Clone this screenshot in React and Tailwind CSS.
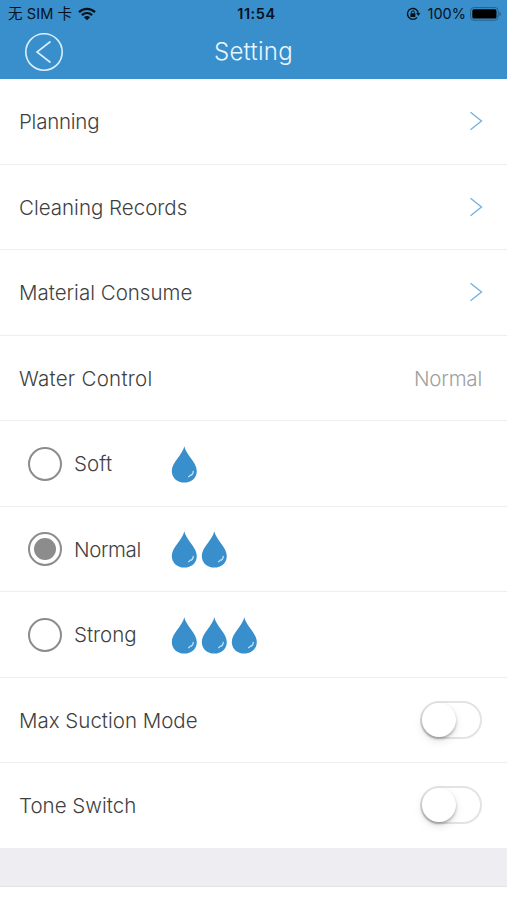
import React, { useState } from "react";

const links = [
  { label: "Planning", tracking: "tracking-[-0.25px]" },
  { label: "Cleaning Records", tracking: "tracking-normal" },
  { label: "Material Consume", tracking: "tracking-normal" },
];

const levels = [
  { label: "Soft", drops: 1, tracking: "tracking-[0.1px]" },
  { label: "Normal", drops: 2, tracking: "tracking-[-0.4px]" },
  { label: "Strong", drops: 3, tracking: "tracking-normal" },
];

const Row = ({ children }) => (
  <div className="flex h-[85.5px] items-center border-b-[1.5px] border-[#eeeeef] pl-[19px] pr-[25px]">
    {children}
  </div>
);

const Wifi = () => (
  <svg width="18" height="14" viewBox="0 0 18 14" className="ml-[6px]">
    <g fill="none" stroke="#06121c" strokeWidth="2.3">
      <path d="M1 5.1C5.6 .7 12.4 .7 17 5.1" />
      <path d="M3.9 8.1c3-2.7 7.2-2.7 10.2 0" />
    </g>
    <path d="M9 13.2 5.9 10.2c1.8-1.5 4.4-1.5 6.2 0z" fill="#06121c" />
  </svg>
);

const RotationLock = () => (
  <svg width="15" height="14" viewBox="0 0 15 14">
    <path d="M11.1 10.3A5.4 5.4 0 1 1 12.3 7" fill="none" stroke="#06121c" strokeWidth="1.3" />
    <path d="M10.2 6h4.2l-2.1 3z" fill="#06121c" />
    <rect x="4.4" y="6.3" width="5" height="3.8" rx=".5" fill="#06121c" />
    <path d="M5.4 6.5V5.3a1.5 1.5 0 0 1 3 0v1.2" fill="none" stroke="#06121c" strokeWidth="1" />
  </svg>
);

const Battery = () => (
  <svg width="32" height="14" viewBox="0 0 32 14" className="ml-[4px]">
    <rect x=".6" y=".6" width="27.6" height="12.6" rx="3.2" fill="none" stroke="#27608a" strokeWidth="1" />
    <rect x="2.3" y="2.3" width="24.2" height="9.2" rx="1.6" fill="#000" />
    <path d="M29.4 4.7c1.9.7 1.9 3.7 0 4.4z" fill="#27608a" />
  </svg>
);

const Chevron = () => (
  <svg width="14" height="20" viewBox="0 0 14 20" className="mr-[-1px]">
    <path d="M1.5 1.3 12.5 10 1.5 18.7" fill="none" stroke="#72afdd" strokeWidth="1.3" />
  </svg>
);

const Drop = () => (
  <svg width="26" height="38" viewBox="0 0 26 38">
    <path
      d="M13.3 .3C14.8 8.5 25.8 16.5 25.8 24.9 25.8 31.8 20.3 36.5 13.3 36.5S.8 31.8 .8 24.9C.8 16.5 11.8 8.5 13.3 .3z"
      fill="#388fcb"
    />
    <path d="M22.4 24.9c-.1 2.1-.9 3.5-2.1 4.4-.5-.5-1-.4-1.3.1-.4.8-1 1.2-1.9 1.5" fill="none" stroke="#c4e5fa" strokeWidth="1.2" />
  </svg>
);

const Radio = ({ checked }) => (
  <span className="flex size-[34px] items-center justify-center rounded-full border-2 border-[#8c8c8c]">
    {checked && <span className="size-[22px] rounded-full bg-[#8c8c8c]" />}
  </span>
);

const Switch = ({ on, onClick }) => (
  <button
    onClick={onClick}
    className={`ml-auto flex h-[38px] w-[62px] items-center rounded-full border-2 ${
      on ? "justify-end border-[#388fcb] bg-[#388fcb]" : "border-[#e3e3e3] bg-white"
    }`}
  >
    <span className="size-[34px] rounded-full bg-white shadow-[0_2px_3px_rgba(0,0,0,0.28),0_4px_10px_rgba(0,0,0,0.1)]" />
  </button>
);

const App = () => {
  const [level, setLevel] = useState("Normal");
  const [maxSuction, setMaxSuction] = useState(false);
  const [tone, setTone] = useState(false);

  return (
    <div className="h-[900px] w-[507px] overflow-hidden bg-white font-['Inter','Noto_Sans_CJK_SC',sans-serif] text-[20.5px] font-light text-[#3f3f3f]">
      {/* Header */}
      <header className="h-[79px] bg-[#388fcc]">
        <div className="grid h-[27px] grid-cols-3 items-center pl-[8px] pr-[5px] text-[14.5px] font-normal text-[#06121c]">
          <div className="flex items-center">
            <span className="whitespace-pre tracking-[0.1px]">无 SIM 卡</span>
            <Wifi />
          </div>
          <span className="pl-[3px] text-center text-[14.5px] font-semibold tracking-[0.6px]">11:54</span>
          <div className="flex items-center justify-end">
            <RotationLock />
            <span className="ml-[7px]">100%</span>
            <Battery />
          </div>
        </div>
        <div className="grid h-[50px] grid-cols-[1fr_auto_1fr] items-center pl-[24px] pr-[24px]">
          <svg width="40" height="40" viewBox="0 0 40 40" fill="none" stroke="#d9efff">
            <circle cx="20" cy="20" r="18.2" strokeWidth="1.6" />
            <path d="M26.5 9.5 13 20l13.5 10.5" strokeWidth="1.6" />
          </svg>
          <h1 className="text-[24px] tracking-[0.3px] text-[#e9f6ff]">Setting</h1>
        </div>
      </header>

      {/* Links */}
      {links.map((link) => (
        <Row key={link.label}>
          <span className={`flex-1 pt-[3px] ${link.tracking}`}>{link.label}</span>
          <Chevron />
        </Row>
      ))}

      {/* Water level */}
      <Row>
        <span className="flex-1 pt-[3px] tracking-[0.25px]">Water Control</span>
        <span className="pt-[3px] tracking-[-0.2px] text-[#a0a0a0]">{level}</span>
      </Row>
      {levels.map(({ label, drops, tracking }) => (
        <Row key={label}>
          <button className="flex items-center pt-[1px] pl-[9px]" onClick={() => setLevel(label)}>
            <Radio checked={level === label} />
            <span className={`ml-[12px] w-[97px] pt-[2px] text-left ${tracking}`}>{label}</span>
            <span className="flex gap-[4px] pt-[2px]">
              {Array.from({ length: drops }, (_, i) => (
                <Drop key={i} />
              ))}
            </span>
          </button>
        </Row>
      ))}

      {/* Switches */}
      <Row>
        <span className="pt-[3px]">Max Suction Mode</span>
        <Switch on={maxSuction} onClick={() => setMaxSuction(!maxSuction)} />
      </Row>
      <Row>
        <span className="pt-[3px]">Tone Switch</span>
        <Switch on={tone} onClick={() => setTone(!tone)} />
      </Row>

      <div className="h-[38px] border-b border-[#e4e4e8] bg-[#eeedf2]" />
    </div>
  );
};

export default App;
